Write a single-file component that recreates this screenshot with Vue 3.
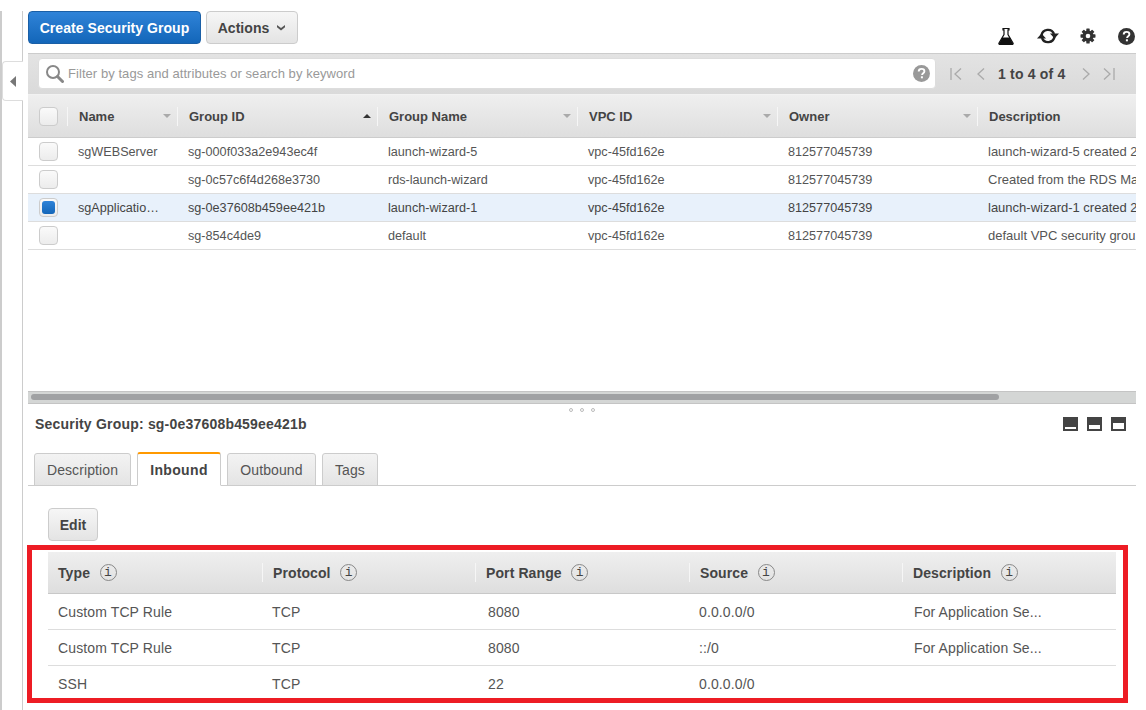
<script setup>
const topCols = [
  { label: 'Name', w: 110, sort: 'off' },
  { label: 'Group ID', w: 200, sort: 'up' },
  { label: 'Group Name', w: 200, sort: 'off' },
  { label: 'VPC ID', w: 200, sort: 'off' },
  { label: 'Owner', w: 200, sort: 'off' },
  { label: 'Description', w: 158, sort: '' }
]
const groups = [
  { cells: ['sgWEBServer', 'sg-000f033a2e943ec4f', 'launch-wizard-5', 'vpc-45fd162e', '812577045739', 'launch-wizard-5 created 2'], sel: false },
  { cells: ['', 'sg-0c57c6f4d268e3730', 'rds-launch-wizard', 'vpc-45fd162e', '812577045739', 'Created from the RDS Ma'], sel: false },
  { cells: ['sgApplicatio…', 'sg-0e37608b459ee421b', 'launch-wizard-1', 'vpc-45fd162e', '812577045739', 'launch-wizard-1 created 2'], sel: true },
  { cells: ['', 'sg-854c4de9', 'default', 'vpc-45fd162e', '812577045739', 'default VPC security grou'], sel: false }
]
const tabs = ['Description', 'Inbound', 'Outbound', 'Tags']
const ruleCols = [
  { label: 'Type', w: 214 },
  { label: 'Protocol', w: 213 },
  { label: 'Port Range', w: 214 },
  { label: 'Source', w: 213 },
  { label: 'Description', w: 214 }
]
const ruleWidths = [214, 216, 211, 215, 212]
const rules = [
  ['Custom TCP Rule', 'TCP', '8080', '0.0.0.0/0', 'For Application Se...'],
  ['Custom TCP Rule', 'TCP', '8080', '::/0', 'For Application Se...'],
  ['SSH', 'TCP', '22', '0.0.0.0/0', '']
]
</script>

<template>
  <div class="page">
    <aside class="rail">
      <button class="collapse" aria-label="Collapse">
        <svg width="6" height="11" viewBox="0 0 6 11"><path d="M6 0V11L0 5.500Z" fill="#777" /></svg>
      </button>
    </aside>

    <main class="main">
      <header class="toolbar">
        <button class="btn primary">Create Security Group</button>
        <button class="btn actions">
          Actions
          <svg width="10" height="7" viewBox="0 0 10 7"><path d="M1 1l4 3L9 1v2.200L5 6.500 1 3.200Z" fill="#555" /></svg>
        </button>
        <div class="tools">
          <svg width="18" height="18" viewBox="0 0 18 18"><path d="M6 1.500h6v1.300h-1v4.700L16 16a1 1 0 0 1-.9 1.500H2.900A1 1 0 0 1 2 16l5-8.500V2.800H6Z" fill="#fff" stroke="#111" stroke-width="1.200" /><path d="M5.200 10.500h7.600l3.400 6.500H1.800Z" fill="#111" /></svg>
          <svg width="22" height="18" viewBox="0 0 22 18"><path d="M4.500 8.500A6.500 6.500 0 0 1 17 7" fill="none" stroke="#222" stroke-width="2.400" /><path d="M17.500 9.500A6.500 6.500 0 0 1 5 11" fill="none" stroke="#222" stroke-width="2.400" /><path d="M13 6.500h9l-4.500 5Z" fill="#222" /><path d="M0 11.500h9l-4.500-5Z" fill="#222" /></svg>
          <svg width="16" height="16" viewBox="0 0 16 16"><g fill="#333"><circle cx="8" cy="8" r="5.500" /><rect x="6.300" y="0.500" width="3.400" height="15" rx=".6" /><rect x="6.300" y="0.500" width="3.400" height="15" rx=".6" transform="rotate(45 8 8)" /><rect x="6.300" y="0.500" width="3.400" height="15" rx=".6" transform="rotate(90 8 8)" /><rect x="6.300" y="0.500" width="3.400" height="15" rx=".6" transform="rotate(135 8 8)" /></g><circle cx="8" cy="8" r="2.300" fill="#fff" /></svg>
          <svg width="17" height="17" viewBox="0 0 17 17"><circle cx="8.500" cy="8.500" r="8.500" fill="#333" /><path d="M5.700 6.400c0-1.700 1.300-2.500 2.900-2.500s2.800.9 2.800 2.300c0 2.100-2.300 2-2.300 3.800" fill="none" stroke="#fff" stroke-width="1.900" /><rect x="7.900" y="11.300" width="2" height="2" fill="#fff" /></svg>
        </div>
      </header>

      <section class="filterbar">
        <div class="search">
          <svg class="glass" width="19" height="19" viewBox="0 0 19 19"><circle cx="8" cy="8" r="6" fill="none" stroke="#888" stroke-width="2" /><path d="M12.500 12.500l5 5" stroke="#888" stroke-width="3" stroke-linecap="round" /></svg>
          <span class="placeholder">Filter by tags and attributes or search by keyword</span>
          <svg class="qmark" width="17" height="17" viewBox="0 0 17 17"><circle cx="8.500" cy="8.500" r="8.500" fill="#999" /><path d="M5.700 6.400c0-1.700 1.300-2.500 2.900-2.500s2.800.9 2.800 2.300c0 2.100-2.300 2-2.300 3.800" fill="none" stroke="#fff" stroke-width="1.900" /><rect x="7.900" y="11.300" width="2" height="2" fill="#fff" /></svg>
        </div>
        <nav class="pager">
          <svg width="12" height="14" viewBox="0 0 12 14"><path d="M1 1v12M11 1.500L5 7l6 5.500" fill="none" stroke="#aaa" stroke-width="1.300" /></svg>
          <svg class="p2" width="10" height="14" viewBox="0 0 10 14"><path d="M9 1.500L3 7l6 5.500" fill="none" stroke="#aaa" stroke-width="1.300" /></svg>
          <span class="count">1 to 4 of 4</span>
          <svg class="p3" width="10" height="14" viewBox="0 0 10 14"><path d="M1 1.500L7 7l-6 5.500" fill="none" stroke="#aaa" stroke-width="1.300" /></svg>
          <svg class="p4" width="12" height="14" viewBox="0 0 12 14"><path d="M11 1v12M1 1.500L7 7l-6 5.500" fill="none" stroke="#aaa" stroke-width="1.300" /></svg>
        </nav>
      </section>

      <div class="grid-head">
        <div class="check-cell"><span class="check"></span></div>
        <div v-for="c in topCols" :key="c.label" class="gh-cell" :style="{ width: c.w + 'px' }">
          <span>{{ c.label }}</span>
          <i v-if="c.sort" :class="['sort', c.sort]"></i>
        </div>
      </div>
      <div class="grid-body">
        <div v-for="g in groups" :key="g.cells[1]" :class="['grid-row', { sel: g.sel }]">
          <div class="check-cell"><span :class="['check', { on: g.sel }]"></span></div>
          <div v-for="(t, i) in g.cells" :key="i" class="g-cell" :style="{ width: topCols[i].w + 'px' }">{{ t }}</div>
        </div>
      </div>
      <div class="hscroll"><div class="thumb"></div></div>

      <section class="detail">
        <div class="grip"><i></i><i></i><i></i></div>
        <div class="title-row">
          <h2>Security Group: sg-0e37608b459ee421b</h2>
          <div class="panes">
            <span class="pane s1"><i></i></span>
            <span class="pane s2"><i></i></span>
            <span class="pane s3"><i></i></span>
          </div>
        </div>
        <div class="tabs">
          <div v-for="t in tabs" :key="t" :class="['tab', { active: t === 'Inbound' }]">{{ t }}</div>
        </div>
        <button class="btn edit">Edit</button>
        <div class="rules">
          <div class="rules-head">
            <div v-for="c in ruleCols" :key="c.label" class="rh-cell" :style="{ width: c.w + 'px' }">
              <span>{{ c.label }}</span>
              <span class="info">i</span>
            </div>
          </div>
          <div v-for="(r, ri) in rules" :key="ri" class="rule-row">
            <div v-for="(t, i) in r" :key="i" class="r-cell" :style="{ width: ruleWidths[i] + 'px' }">{{ t }}</div>
          </div>
        </div>
      </section>
    </main>

    <div class="highlight"></div>
  </div>
</template>

<style>
html, body { margin: 0; background: #fff; }
</style>

<style scoped>
.page {
  position: relative;
  width: 1146px;
  height: 710px;
  display: flex;
  overflow: hidden;
  background: #fff;
  color: #444;
  font-family: "Liberation Sans", Arial, sans-serif;
  font-size: 13px;
}
.rail {
  position: relative;
  box-sizing: border-box;
  width: 23px;
  margin-top: 11px;
  margin-right: 5px;
  border-left: 2px solid #ccc;
  border-right: 1px solid #ccc;
  flex: none;
}
.collapse {
  position: absolute;
  left: 0;
  top: 50px;
  box-sizing: border-box;
  width: 21px;
  height: 40px;
  padding: 0 0 0 7px;
  display: flex;
  align-items: center;
  background: #fff;
  border: 1px solid #ddd;
  border-right: 0;
  border-radius: 4px 0 0 4px;
}
.main { width: 1108px; flex: none; overflow: hidden; }
.toolbar {
  box-sizing: border-box;
  height: 53px;
  padding-top: 11px;
  display: flex;
  align-items: flex-start;
}
.btn {
  box-sizing: border-box;
  height: 33px;
  border: 1px solid #ccc;
  border-radius: 4px;
  background: linear-gradient(#f6f6f6, #e4e4e4);
  color: #444;
  font: bold 14px "Liberation Sans", Arial, sans-serif;
  letter-spacing: .05px;
  padding: 0;
}
.primary {
  width: 173px;
  color: #fff;
  background: linear-gradient(#2f83d8, #1366b9);
  border-color: #1a5fa6;
}
.actions {
  width: 92px;
  margin-left: 5px;
  display: flex;
  align-items: center;
  justify-content: center;
  gap: 7px;
}
.tools {
  margin-left: auto;
  height: 18px;
  margin-top: 16px;
  display: flex;
  align-items: center;
  width: 139px;
  padding-right: 1px;
  justify-content: space-between;
  box-sizing: border-box;
}
.filterbar {
  box-sizing: border-box;
  height: 42px;
  border-top: 1px solid #ccc;
  border-bottom: 1px solid #f2f2f2;
  background: linear-gradient(#e3e3e3, #dadada);
  display: flex;
  align-items: flex-start;
  padding: 4px 0 0 10px;
}
.search {
  box-sizing: border-box;
  width: 898px;
  height: 31px;
  background: #fff;
  border: 1px solid #ddd;
  border-radius: 4px;
  display: flex;
  align-items: center;
  padding: 0 5px 0 6px;
}
.glass { margin-right: 4px; flex: none; }
.placeholder { color: #999; font-size: 13px; letter-spacing: .06px; }
.qmark { margin-left: auto; }
.pager {
  display: flex;
  align-items: center;
  height: 31px;
  margin-left: 14px;
  color: #444;
}
.p2 { margin-left: 13px; }
.count { font: bold 14px "Liberation Sans", Arial, sans-serif; letter-spacing: .2px; margin-left: 13px; margin-right: 16px; }
.p4 { margin-left: 11px; }
.grid-head {
  box-sizing: border-box;
  height: 43px;
  width: 1108px;
  display: flex;
  align-items: center;
  background: linear-gradient(#efefef, #dedede);
  border-bottom: 1px solid #ccc;
}
.check-cell {
  box-sizing: border-box;
  width: 40px;
  flex: none;
  padding-left: 11px;
  display: flex;
  align-items: center;
}
.grid-head .check-cell { width: 39px; }
.check {
  box-sizing: border-box;
  display: block;
  width: 19px;
  height: 19px;
  border: 1px solid #ccc;
  border-radius: 4px;
  background: linear-gradient(#fafafa, #ececec);
  position: relative;
}
.check.on::after {
  content: "";
  position: absolute;
  inset: 2px;
  border-radius: 3px;
  background: linear-gradient(#2f83d8, #1366b9);
}
.gh-cell {
  box-sizing: border-box;
  flex: none;
  height: 19px;
  padding: 0 6px 0 11px;
  border-left: 1px solid #f6f6f6;
  display: flex;
  align-items: center;
  justify-content: space-between;
  font-weight: bold;
  white-space: nowrap;
}
.sort { width: 0; height: 0; border-left: 4px solid transparent; border-right: 4px solid transparent; }
.sort.off { border-top: 4px solid #aaa; }
.sort.up { border-bottom: 4px solid #333; }
.grid-body { height: 253px; color: #555; }
.grid-row {
  box-sizing: border-box;
  height: 28px;
  width: 1108px;
  display: flex;
  align-items: center;
  border-bottom: 1px solid #ddd;
}
.grid-row.sel { background: #e8f1fb; color: #444; }
.g-cell {
  box-sizing: border-box;
  flex: none;
  padding-left: 10px;
  font-size: 12.65px;
  white-space: nowrap;
  overflow: hidden;
}
.g-cell:last-child { font-size: 13px; }
.hscroll {
  box-sizing: border-box;
  height: 13px;
  padding: 2px 0 0 3px;
  background: #d4d6d5;
  border-top: 1px solid #c4c4c4;
  border-bottom: 1px solid #c4c4c4;
}
.thumb { width: 968px; height: 6px; border-radius: 3px; background: #a0a1a3; }
.detail { position: relative; }
.grip {
  position: absolute;
  left: 541px;
  top: 4px;
  display: flex;
  gap: 7px;
}
.grip i { width: 4px; height: 4px; border: 1px solid #bbb; border-radius: 50%; box-sizing: border-box; }
.title-row {
  box-sizing: border-box;
  height: 40px;
  margin-bottom: 8px;
  padding: 0 10px 0 7px;
  display: flex;
  align-items: center;
  justify-content: space-between;
}
h2 { margin: 0; font: bold 14px "Liberation Sans", Arial, sans-serif; color: #444; letter-spacing: .2px; }
.panes { display: flex; gap: 9px; }
.pane {
  box-sizing: border-box;
  width: 15px;
  height: 14px;
  background: #444;
  display: flex;
  align-items: flex-end;
  justify-content: center;
  padding-bottom: 2px;
}
.pane i { display: block; width: 11px; background: #fff; }
.s1 i { height: 2px; }
.s2 i { height: 4px; }
.s3 i { height: 6px; }
.tabs {
  box-sizing: border-box;
  height: 34px;
  border-bottom: 1px solid #ccc;
  padding-left: 6px;
  display: flex;
  align-items: flex-end;
  gap: 6px;
}
.tab {
  box-sizing: border-box;
  height: 33px;
  margin-bottom: -1px;
  display: flex;
  align-items: center;
  justify-content: center;
  font-size: 14px;
  letter-spacing: .1px;
  color: #555;
  border: 1px solid #ccc;
  border-radius: 3px 3px 0 0;
  background: linear-gradient(#f3f3f3, #e4e4e4);
}
.tab:nth-child(1) { width: 97px; }
.tab:nth-child(2) { width: 84px; }
.tab:nth-child(3) { width: 89px; }
.tab:nth-child(4) { width: 56px; }
.tab.active {
  height: 34px;
  color: #444;
  font-weight: bold;
  background: #fff;
  border-top: 2px solid #f90;
  border-bottom-color: #fff;
  letter-spacing: .35px;
}
.edit {
  display: block;
  width: 50px;
  margin: 22px 0 0 20px;
}
.rules { margin: 11px 0 0 20px; width: 1068px; }
.rules-head {
  box-sizing: border-box;
  height: 42px;
  display: flex;
  align-items: center;
  background: linear-gradient(#efefef, #dedede);
  border-bottom: 1px solid #c8c8c8;
}
.rh-cell {
  box-sizing: border-box;
  flex: none;
  height: 19px;
  padding-left: 10px;
  border-left: 1px solid #f6f6f6;
  display: flex;
  align-items: center;
  gap: 9.500px;
  font-size: 14px;
  font-weight: bold;
  letter-spacing: .1px;
}
.rh-cell:first-child { border-left: 0; }
.info {
  box-sizing: border-box;
  width: 17px;
  height: 17px;
  border: 1px solid #888;
  border-radius: 50%;
  display: flex;
  align-items: center;
  justify-content: center;
  font: 13px "Liberation Mono", monospace;
  color: #444;
}
.rule-row {
  box-sizing: border-box;
  height: 36px;
  display: flex;
  align-items: center;
  border-bottom: 1px solid #ddd;
  font-size: 14px;
  color: #555;
  letter-spacing: .12px;
}
.r-cell { box-sizing: border-box; flex: none; padding-left: 10px; white-space: nowrap; }
.highlight {
  position: absolute;
  left: 27px;
  top: 545px;
  box-sizing: border-box;
  width: 1101px;
  height: 158px;
  border: 5px solid #ed1c24;
  pointer-events: none;
}
</style>
